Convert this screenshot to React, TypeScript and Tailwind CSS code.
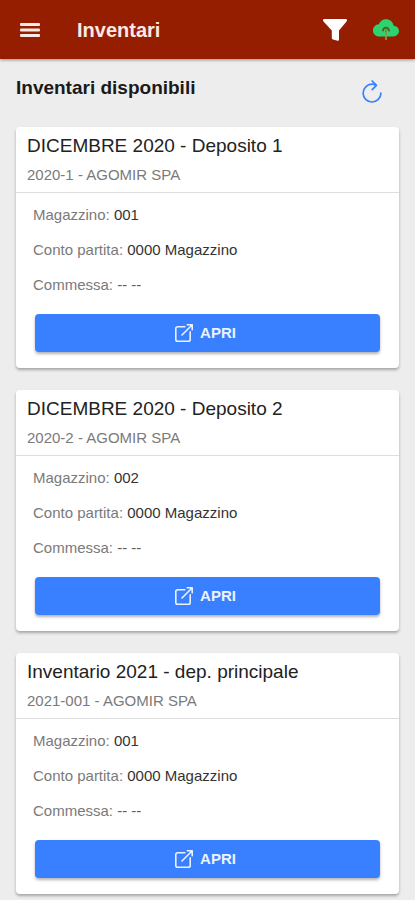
import React from 'react'

type Inventory = {
  title: string
  code: string
  company: string
  warehouse: string
  account: string
  order: string
}

const inventories: Inventory[] = [
  {
    title: 'DICEMBRE 2020 - Deposito 1',
    code: '2020-1',
    company: 'AGOMIR SPA',
    warehouse: '001',
    account: '0000 Magazzino',
    order: '-- --',
  },
  {
    title: 'DICEMBRE 2020 - Deposito 2',
    code: '2020-2',
    company: 'AGOMIR SPA',
    warehouse: '002',
    account: '0000 Magazzino',
    order: '-- --',
  },
  {
    title: 'Inventario 2021 - dep. principale',
    code: '2021-001',
    company: 'AGOMIR SPA',
    warehouse: '001',
    account: '0000 Magazzino',
    order: '-- --',
  },
]

const MenuIcon = () => (
  <svg viewBox="0 0 20 14" className="h-[14px] w-[20px]" fill="currentColor">
    <rect width="20" height="3" rx="1" />
    <rect y="5.5" width="20" height="3" rx="1" />
    <rect y="11" width="20" height="3" rx="1" />
  </svg>
)

const FunnelIcon = () => (
  <svg viewBox="0 0 24 22" className="h-[22px] w-[24px]" fill="currentColor">
    <path d="M1.2 0h21.6c1 0 1.5 1.3.9 2.2L16 11.5v9.3c0 .7-.6 1.1-1.2.9l-5-1.3c-.6-.2-1-.7-1-1.3v-7.6L.3 2.2C-.3 1.3.2 0 1.2 0z" />
  </svg>
)

const CloudUploadIcon = () => (
  <svg viewBox="0 0 26 21" className="h-[21px] w-[26px]">
    <path
      d="M20.6 6.7C19.9 2.8 17 .2 13 .2 9.6.2 6.800 2.200 5.900 5.300 2.500 5.600 0 8.100 0 11.400c0 3.600 2.700 6 6.200 6h13.900c3.300 0 5.900-2.100 5.900-5.300 0-3.100-2.300-5.200-5.400-5.400z"
      fill="#2dd36f"
    />
    <path d="M10 11.600C10.300 9.600 11.500 8.600 13 8.600s2.700 1 3 3" fill="none" stroke="#4f5f20" strokeWidth="1.800" strokeLinecap="round" />
    <path d="M13 10v5" stroke="#6b8a38" strokeWidth="1.600" />
    <path d="M13 14v6.200" stroke="#8a9a48" strokeWidth="1.800" strokeLinecap="round" />
  </svg>
)

const RefreshIcon = () => (
  <svg
    viewBox="0 0 20 23"
    className="h-[23px] w-[20px]"
    fill="none"
    stroke="currentColor"
    strokeWidth="1.7"
    strokeLinecap="round"
    strokeLinejoin="round"
  >
    <path d="M14 5.200C12.500 4.400 11.300 4.200 10 4.200A8.900 8.900 0 1 0 18.900 13.200" />
    <path d="M10.200 1l4.200 4.300-4.200 4.300" />
  </svg>
)

const OpenIcon = () => (
  <svg
    viewBox="0 0 18 18"
    className="h-[18px] w-[18px]"
    fill="none"
    stroke="currentColor"
    strokeWidth="1.6"
    strokeLinecap="round"
    strokeLinejoin="round"
  >
    <path d="M15.2 7.8v7.6a1.8 1.8 0 0 1-1.8 1.8H2.6a1.8 1.8 0 0 1-1.8-1.8V4.600a1.800 1.800 0 0 1 1.800-1.800h7.200" />
    <path d="M12.300.8h4.900v4.900M7 11 17.200.8" />
  </svg>
)

const Field: React.FC<{ label: string; value: string }> = ({ label, value }) => (
  <p className="text-[15px] leading-[35px] text-[#7a7a7a]">
    {label}: <span className={value.startsWith('--') ? 'text-[#5c5c5c]' : 'text-[#333333]'}>{value}</span>
  </p>
)

const InventoryCard: React.FC<{ item: Inventory }> = ({ item }) => (
  <article className="rounded-[4px] bg-white shadow-[0_2px_3px_rgba(0,0,0,0.3)]">
    <div className="border-b border-[#dedede] px-[11px] pt-[7px] pb-[7px]">
      <h3 className="text-[19px] leading-[24px] text-[#222222]">{item.title}</h3>
      <p className="pt-[7px] text-[15px] leading-[20px] text-[#7a7a7a]">{item.code} - {item.company}</p>
    </div>
    <div className="px-[17px] pt-[4px] pb-[16px]">
      <Field label="Magazzino" value={item.warehouse} />
      <Field label="Conto partita" value={item.account} />
      <Field label="Commessa" value={item.order} />
      <div className="px-[2px] pt-[12px]">
        <button className="flex h-[38px] w-full items-center justify-center gap-[7px] rounded-[4px] bg-[#3880ff] pr-[4px] text-[15px] font-bold text-[#ebf2ff] shadow-[0_2px_3px_rgba(0,0,0,0.3)]">
          <OpenIcon />
          APRI
        </button>
      </div>
    </div>
  </article>
)

export const App: React.FC = () => {
  return (
    <div className="min-h-screen bg-[#ededed] font-['Liberation_Sans',Arial,sans-serif]">
      <header className="flex h-[59px] items-center bg-[#961e00] pr-[16px] pl-[20px] text-[#f8e9e6] shadow-[0_1px_3px_rgba(0,0,0,0.4)]">
        <button aria-label="Menu">
          <MenuIcon />
        </button>
        <h1 className="flex-1 pl-[37px] text-[20px] leading-[24px] font-bold">Inventari</h1>
        <div className="flex items-center gap-[26px]">
          <button aria-label="Filtra" className="text-white">
            <FunnelIcon />
          </button>
          <button aria-label="Carica">
            <CloudUploadIcon />
          </button>
        </div>
      </header>
      <main className="px-[16px] pb-[6px]">
        <div className="flex items-start justify-between pt-[16px] pr-[17px] pb-[22px]">
          <h2 className="text-[19px] leading-[26px] font-bold text-[#1a1a1a]">Inventari disponibili</h2>
          <button aria-label="Aggiorna" className="pt-[5px] pb-[2px] text-[#3880ff]">
            <RefreshIcon />
          </button>
        </div>
        <div className="flex flex-col gap-[22px]">
          {inventories.map(item => <InventoryCard key={item.code} item={item} />)}
        </div>
      </main>
    </div>
  )
}

export default App
